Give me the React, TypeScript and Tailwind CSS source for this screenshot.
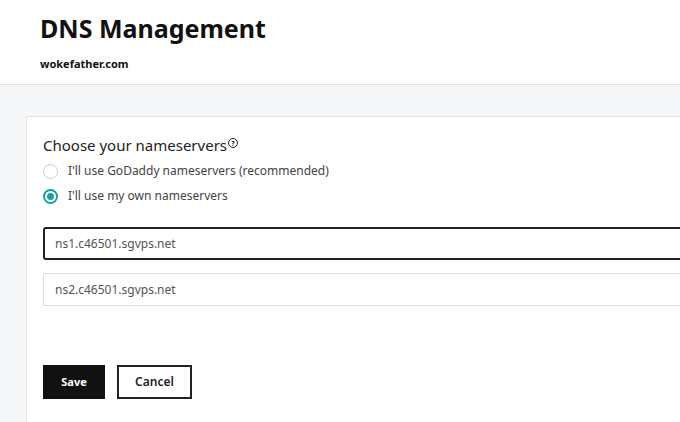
export default function App() {
  return (
    <div className="w-[680px] h-[422px] overflow-hidden bg-[#f5f7f8] font-['Open_Sans',sans-serif] text-[#111]">
      <div className="h-[85px] bg-white border-b border-[#e2e2e2] pl-[40px] pt-[10px]">
        <h1 className="text-[25px] font-bold leading-[36px] font-['Inter',sans-serif]">DNS Management</h1>
        <p className="mt-[10px] text-[11px] font-bold font-['Inter',sans-serif]">wokefather.com</p>
      </div>
      <div className="ml-[26px] mt-[31px] w-[700px] h-[320px] bg-white border border-[#e4e4e4] pl-[16px] pt-[18px]">
        <div className="text-[15px] leading-[20px] text-[#222] flex items-start font-['Roboto',sans-serif]">
          Choose your nameservers
          <span className="ml-[1px] mt-[3px] inline-flex items-center justify-center w-[10px] h-[10px] rounded-full border border-[#222] text-[7px] font-bold leading-none">?</span>
        </div>
        <label className="mt-[6px] flex items-center gap-[10px] text-[12px] text-[#444] h-[20px]">
          <span className="w-[15px] h-[15px] rounded-full border border-[#ccc]" />
          I'll use GoDaddy nameservers (recommended)
        </label>
        <label className="mt-[5px] flex items-center gap-[10px] text-[12px] text-[#444] h-[20px]">
          <span className="w-[15px] h-[15px] rounded-full border-2 border-[#1aa199] flex items-center justify-center">
            <span className="w-[7px] h-[7px] rounded-full bg-[#1aa199]" />
          </span>
          I'll use my own nameservers
        </label>
        <div className="mt-[21px] h-[33px] border-2 border-[#222] rounded-[3px] flex items-center pl-[10px] text-[12px] text-[#555]">
          ns1.c46501.sgvps.net
        </div>
        <div className="mt-[13px] h-[33px] border border-[#ddd] flex items-center pl-[11px] text-[12px] text-[#555]">
          ns2.c46501.sgvps.net
        </div>
        <div className="mt-[59px] flex gap-[12px]">
          <button className="w-[62px] h-[34px] bg-[#111] text-white text-[11px] font-bold">Save</button>
          <button className="w-[75px] h-[34px] border-2 border-[#222] text-[12px] font-semibold text-[#222]">Cancel</button>
        </div>
      </div>
    </div>
  );
}
